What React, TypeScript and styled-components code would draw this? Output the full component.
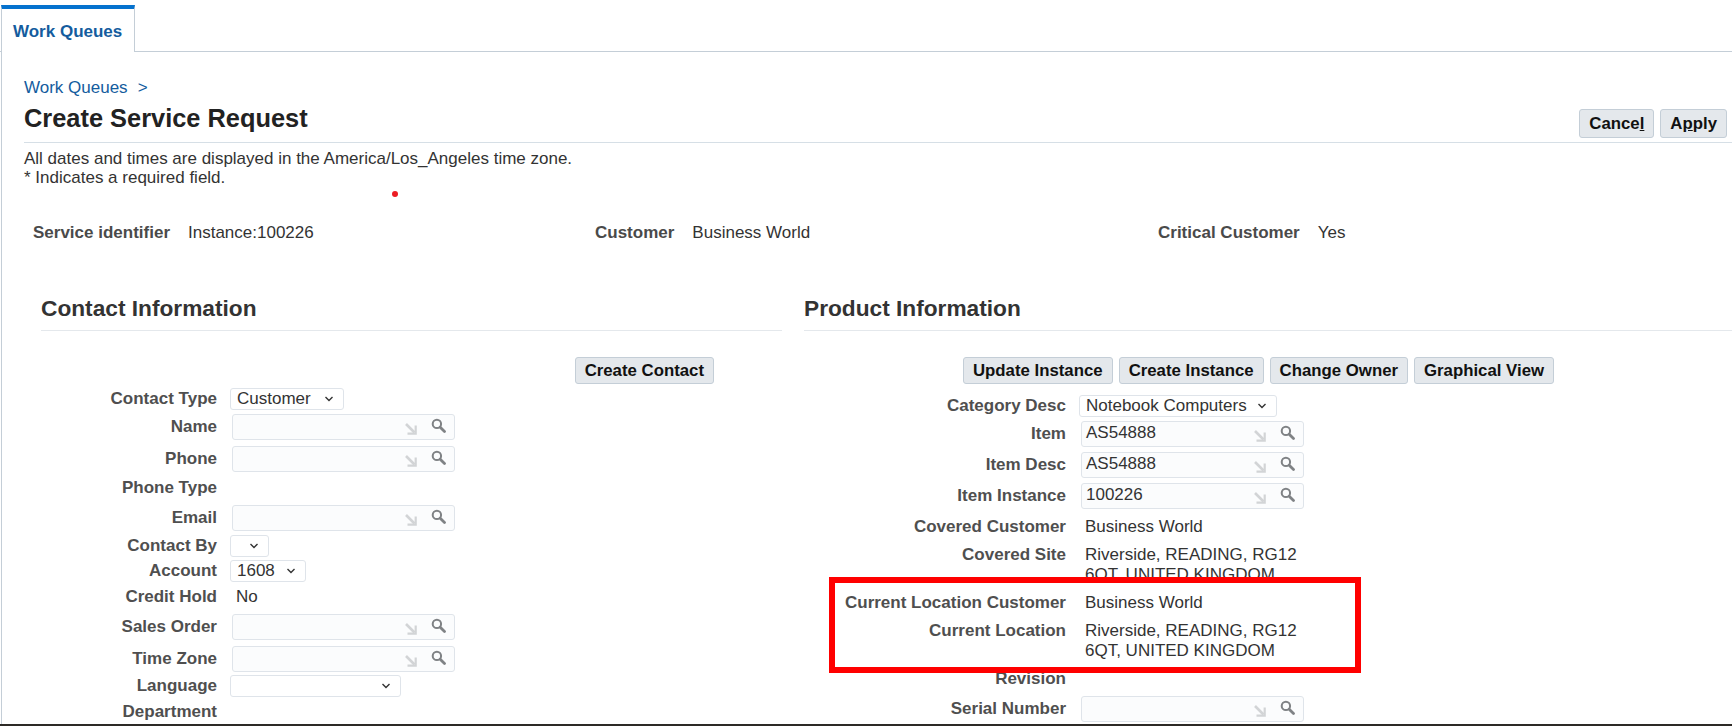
import React from 'react';
import styled, { createGlobalStyle } from 'styled-components';

const GlobalStyle = createGlobalStyle`
    html, body {
        margin: 0;
        padding: 0;
        height: 726px;
        overflow: hidden;
        background: #ffffff;
        font-family: "Liberation Sans", Arial, sans-serif;
        color: #333333;
    }
`;

function LovIcons() {
    return (
        <IconBox>
            <svg width="12" height="12" viewBox="0 0 12 12">
                <path d="M1 1 L9.5 9.5" stroke="#d2d4d6" strokeWidth="2.6" fill="none" />
                <path d="M10.7 2.5 L10.7 10.7 L2.5 10.7" stroke="#d2d4d6" strokeWidth="2.2" fill="none" />
            </svg>
            <SearchSvg width="15" height="15" viewBox="0 0 14 14">
                <circle cx="5.5" cy="5.5" r="3.9" fill="none" stroke="#7f8285" strokeWidth="1.9" />
                <path d="M8.6 8.6 L12.6 12.6" stroke="#7f8285" strokeWidth="2.6" strokeLinecap="round" />
            </SearchSvg>
        </IconBox>
    );
}

function Lov({ value }: { value?: string }) {
    return (
        <LovBox>
            <LovText>{value}</LovText>
            <LovIcons />
        </LovBox>
    );
}

function Choice({ value, width }: { value?: string; width: number }) {
    return (
        <ChoiceBox $width={width}>
            <span>{value}</span>
            <svg width="10" height="6" viewBox="0 0 10 6">
                <path d="M1.5 1 L5 4.5 L8.5 1" fill="none" stroke="#333" strokeWidth="1.4" />
            </svg>
        </ChoiceBox>
    );
}

function App() {
    return (
        <>
            <GlobalStyle />
            <Page>
                <TabBar>
                    <Tab>Work Queues</Tab>
                </TabBar>
                <Content>
                    <Crumbs>
                        <span>Work Queues</span>
                        <span>&gt;</span>
                    </Crumbs>
                    <TitleRow>
                        <Title>Create Service Request</Title>
                        <Actions>
                            <Button $height={29}>Cance<u>l</u></Button>
                            <Button $height={29}>A<u>p</u>ply</Button>
                        </Actions>
                    </TitleRow>
                    <Notes>
                        <div>All dates and times are displayed in the America/Los_Angeles time zone.</div>
                        <div>* Indicates a required field.</div>
                    </Notes>
                    <RedDot />
                    <Summary>
                        <SummaryItem><SummaryLabel>Service identifier</SummaryLabel><span>Instance:100226</span></SummaryItem>
                        <SummaryItem><SummaryLabel>Customer</SummaryLabel><span>Business World</span></SummaryItem>
                        <SummaryItem><SummaryLabel>Critical Customer</SummaryLabel><span>Yes</span></SummaryItem>
                    </Summary>
                    <Columns>
                        <div>
                            <SectionTitle>Contact Information</SectionTitle>
                            <ButtonBar $right={68}>
                                <Button $height={27}>Create Contact</Button>
                            </ButtonBar>
                            <FormRows $offset={1}>
                                <Row $height={28} $labelWidth={176}><Label>Contact Type</Label><Choice value="Customer" width={114} /></Row>
                                <Row $height={32} $labelWidth={176}><Label>Name</Label><Lov /></Row>
                                <Row $height={29} $labelWidth={176}><Label>Phone</Label><Lov /></Row>
                                <Row $height={30} $labelWidth={176}><Label>Phone Type</Label></Row>
                                <Row $height={28} $labelWidth={176}><Label>Email</Label><Lov /></Row>
                                <Row $height={25} $labelWidth={176}><Label>Contact By</Label><Choice width={39} /></Row>
                                <Row $height={26} $labelWidth={176}><Label>Account</Label><Choice value="1608" width={76} /></Row>
                                <Row $height={30} $labelWidth={176}><Label>Credit Hold</Label><Value>No</Value></Row>
                                <Row $height={32} $labelWidth={176}><Label>Sales Order</Label><Lov /></Row>
                                <Row $height={27} $labelWidth={176}><Label>Time Zone</Label><Lov /></Row>
                                <Row $height={26} $labelWidth={176}><Label>Language</Label><Choice width={171} /></Row>
                                <Row $height={26} $labelWidth={176}><Label>Department</Label></Row>
                            </FormRows>
                        </div>
                        <div>
                            <SectionTitle>Product Information</SectionTitle>
                            <ButtonBar $left={159}>
                                <Button $height={27}>Update Instance</Button>
                                <Button $height={27}>Create Instance</Button>
                                <Button $height={27}>Change Owner</Button>
                                <Button $height={27}>Graphical View</Button>
                            </ButtonBar>
                            <FormRows $offset={8}>
                                <Row $height={28} $labelWidth={262}><Label>Category Desc</Label><Choice value="Notebook Computers" width={198} /></Row>
                                <Row $height={31} $labelWidth={262}><Label>Item</Label><Lov value="AS54888" /></Row>
                                <Row $height={31} $labelWidth={262}><Label>Item Desc</Label><Lov value="AS54888" /></Row>
                                <Row $height={31} $labelWidth={262}><Label>Item Instance</Label><Lov value="100226" /></Row>
                                <Row $height={28} $labelWidth={262}><Label>Covered Customer</Label><Value>Business World</Value></Row>
                                <Row $height={48} $labelWidth={262}><Label>Covered Site</Label><Value>Riverside, READING, RG12<br />6QT, UNITED KINGDOM</Value></Row>
                                <Row $height={28} $labelWidth={262}><Label>Current Location Customer</Label><Value>Business World</Value></Row>
                                <Row $height={48} $labelWidth={262}><Label>Current Location</Label><Value>Riverside, READING, RG12<br />6QT, UNITED KINGDOM</Value></Row>
                                <Row $height={30} $labelWidth={262}><Label>Revision</Label></Row>
                                <Row $height={28} $labelWidth={262}><Label>Serial Number</Label><Lov /></Row>
                            </FormRows>
                        </div>
                    </Columns>
                </Content>
                <Highlight />
                <BottomBar />
            </Page>
        </>
    );
}

const Page = styled.div`
    position: relative;
    display: flex;
    flex-direction: column;
    width: 1732px;
    height: 726px;
    overflow: hidden;
`;

const TabBar = styled.div`
    display: flex;
    flex-shrink: 0;
    box-sizing: border-box;
    height: 52px;
    padding: 5px 0 0 1px;
    border-bottom: 1px solid #c4ced7;
`;

const Tab = styled.div`
    box-sizing: border-box;
    width: 134px;
    height: 47px;
    padding: 12px 0 0 11px;
    background: #ffffff;
    border-top: 4px solid #0572ce;
    border-right: 1px solid #c4ced7;
    border-left: 1px solid #c4ced7;
    color: #145c9e;
    font-size: 17px;
    font-weight: bold;
    line-height: 22px;
`;

const Content = styled.div`
    flex: 1;
    min-height: 0;
    overflow: hidden;
    margin-left: 1px;
    padding-left: 22px;
    border-left: 1px solid #c4ced7;
`;

const Crumbs = styled.div`
    display: flex;
    gap: 10px;
    height: 20px;
    margin-top: 26px;
    color: #145c9e;
    font-size: 17px;
    line-height: 20px;
`;

const TitleRow = styled.div`
    display: flex;
    justify-content: space-between;
    align-items: flex-end;
    box-sizing: border-box;
    height: 45px;
    padding: 0 5px 4px 0;
    border-bottom: 1px solid #d6dfe6;
`;

const Title = styled.h1`
    align-self: flex-start;
    margin: 0;
    color: #222222;
    font-size: 25.4px;
    font-weight: bold;
    line-height: 40px;
`;

const Actions = styled.div`
    display: flex;
    gap: 6px;
`;

const Button = styled.div<{ $height: number }>`
    display: flex;
    align-items: center;
    box-sizing: border-box;
    height: ${(p) => p.$height}px;
    padding: 0 9px;
    background: #e4e8ec;
    border: 1px solid #c4ced7;
    border-radius: 3px;
    color: #111111;
    font-size: 16.8px;
    font-weight: bold;
    white-space: pre;
`;

const Notes = styled.div`
    margin-top: 6px;
    color: #333333;
    font-size: 17px;
    line-height: 19px;
`;

const RedDot = styled.div`
    position: absolute;
    left: 392px;
    top: 191px;
    width: 6px;
    height: 6px;
    border-radius: 50%;
    background: #ec1c24;
`;

const Summary = styled.div`
    display: grid;
    grid-template-columns: 562px 563px 1fr;
    height: 22px;
    margin: 35px 0 0 9px;
    font-size: 17px;
    line-height: 22px;
`;

const SummaryItem = styled.div`
    display: flex;
    gap: 18px;
`;

const SummaryLabel = styled.span`
    color: #4a4a4a;
    font-weight: bold;
`;

const Columns = styled.div`
    display: grid;
    grid-template-columns: 741px 1fr;
    column-gap: 22px;
    margin: 51px 0 0 17px;
`;

const SectionTitle = styled.h2`
    box-sizing: border-box;
    height: 36px;
    margin: 0;
    border-bottom: 1px solid #e4e8ec;
    color: #333333;
    font-size: 22.7px;
    font-weight: bold;
    line-height: 26px;
`;

const ButtonBar = styled.div<{ $right?: number; $left?: number }>`
    display: flex;
    justify-content: ${(p) => (p.$right ? 'flex-end' : 'flex-start')};
    gap: 6px;
    margin-top: 26px;
    padding-right: ${(p) => p.$right ?? 0}px;
    padding-left: ${(p) => p.$left ?? 0}px;
`;

const FormRows = styled.div<{ $offset: number }>`
    display: flex;
    flex-direction: column;
    margin-top: ${(p) => p.$offset}px;
`;

const Row = styled.div<{ $height: number; $labelWidth: number }>`
    display: grid;
    grid-template-columns: ${(p) => p.$labelWidth}px 1fr;
    grid-template-rows: 28px;
    column-gap: 13px;
    align-items: center;
    height: ${(p) => p.$height}px;
    font-size: 17px;
`;

const Label = styled.div`
    color: #4f4f4f;
    font-weight: bold;
    line-height: 22px;
    text-align: right;
`;

const Value = styled.div`
    align-self: start;
    padding: 4px 0 0 6px;
    color: #333333;
    line-height: 20px;
`;

const LovBox = styled.div`
    display: flex;
    align-items: center;
    justify-content: space-between;
    box-sizing: border-box;
    width: 223px;
    height: 26px;
    margin-left: 2px;
    padding: 0 8px 0 4px;
    background: #fbfcfd;
    border: 1px solid #dfe4ea;
    border-radius: 3px;
`;

const LovText = styled.span`
    margin-top: -3px;
    color: #333333;
    font-size: 17px;
`;

const IconBox = styled.span`
    display: flex;
    align-items: flex-end;
    align-self: flex-end;
    gap: 14px;
    margin-left: auto;
    padding-bottom: 4px;
`;

const SearchSvg = styled.svg`
    margin-bottom: 2px;
`;

const ChoiceBox = styled.div<{ $width: number }>`
    display: flex;
    align-items: center;
    justify-content: space-between;
    box-sizing: border-box;
    width: ${(p) => p.$width}px;
    height: 22px;
    padding: 0 9px 0 6px;
    background: #ffffff;
    border: 1px solid #dfe4ea;
    border-radius: 3px;
    color: #333333;
    font-size: 17px;
`;

const Highlight = styled.div`
    position: absolute;
    left: 829px;
    top: 577px;
    box-sizing: border-box;
    width: 532px;
    height: 96px;
    border: 6px solid #ff0000;
`;

const BottomBar = styled.div`
    flex-shrink: 0;
    height: 2px;
    background: #2d2a26;
`;

export default App;
